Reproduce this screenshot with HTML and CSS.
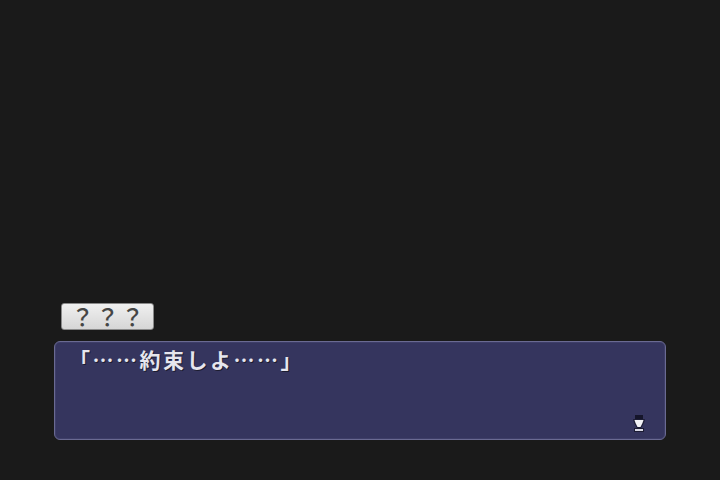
FILE: index.html
```html
<!DOCTYPE html>
<html>

<head>
    <meta charset="utf-8">
    <title>会話</title>
    <link rel="stylesheet" href="styles.css">
</head>

<body>
    <div id="screen">
        <div class="talk">
            <div class="name">？？？</div>
            <div class="window">
                <p class="line">「……約束しよ……」</p>
                <svg class="next" width="14" height="20" viewBox="0 0 14 20">
                    <rect x="3" y="1" width="8" height="4" fill="#15152a" />
                    <path d="M1 5 H13 L12 9 L9 14 H5 L2 9 Z" fill="#1e1e36" />
                    <path d="M2.5 6 H11.5 L10.5 9 L8.5 13 H5.5 L3.5 9 Z" fill="#f2f2f6" />
                    <rect x="2" y="14" width="10" height="4" fill="#1c1c34" />
                    <rect x="3" y="15" width="8" height="2" fill="#d8d8e4" />
                </svg>
            </div>
        </div>
    </div>
</body>

</html>
```

FILE: styles.css
```css
* {
    margin: 0px;
    padding: 0px;
}

body {
    background: #1a1a1a;
    font-family: "Noto Sans CJK JP", "Noto Sans", sans-serif;
}

#screen {
    width: 720px;
    height: 480px;
    display: flex;
    flex-direction: column;
    justify-content: flex-end;
}

.talk {
    display: flex;
    flex-direction: column;
    padding: 0px 54px 40px 54px;
}

.name {
    margin-left: 7px;
    margin-bottom: 11px;
    width: 93px;
    height: 27px;
    box-sizing: border-box;
    border: 1px solid #8a8a8a;
    border-radius: 3px;
    background: linear-gradient(#f0f0f0, #d6d6d6);
    color: #464646;
    font-size: 23px;
    line-height: 25px;
    text-align: center;
    letter-spacing: 2px;
    font-weight: 500;
    text-indent: 2px;
}

.window {
    position: relative;
    height: 99px;
    box-sizing: border-box;
    border: 1px solid #6a6a92;
    border-radius: 6px;
    background: #35355e;
    box-shadow: inset 0px 0px 0px 1px #3e3e68;
    padding: 2px 0px 0px 14px;
}

.line {
    color: #e6e6ee;
    font-size: 21px;
    line-height: 30px;
    letter-spacing: 2.5px;
    font-weight: bold;
    text-shadow: 1px 1px 0px #1c1c30;
}

.next {
    position: absolute;
    right: 19px;
    bottom: 5px;
}
```
